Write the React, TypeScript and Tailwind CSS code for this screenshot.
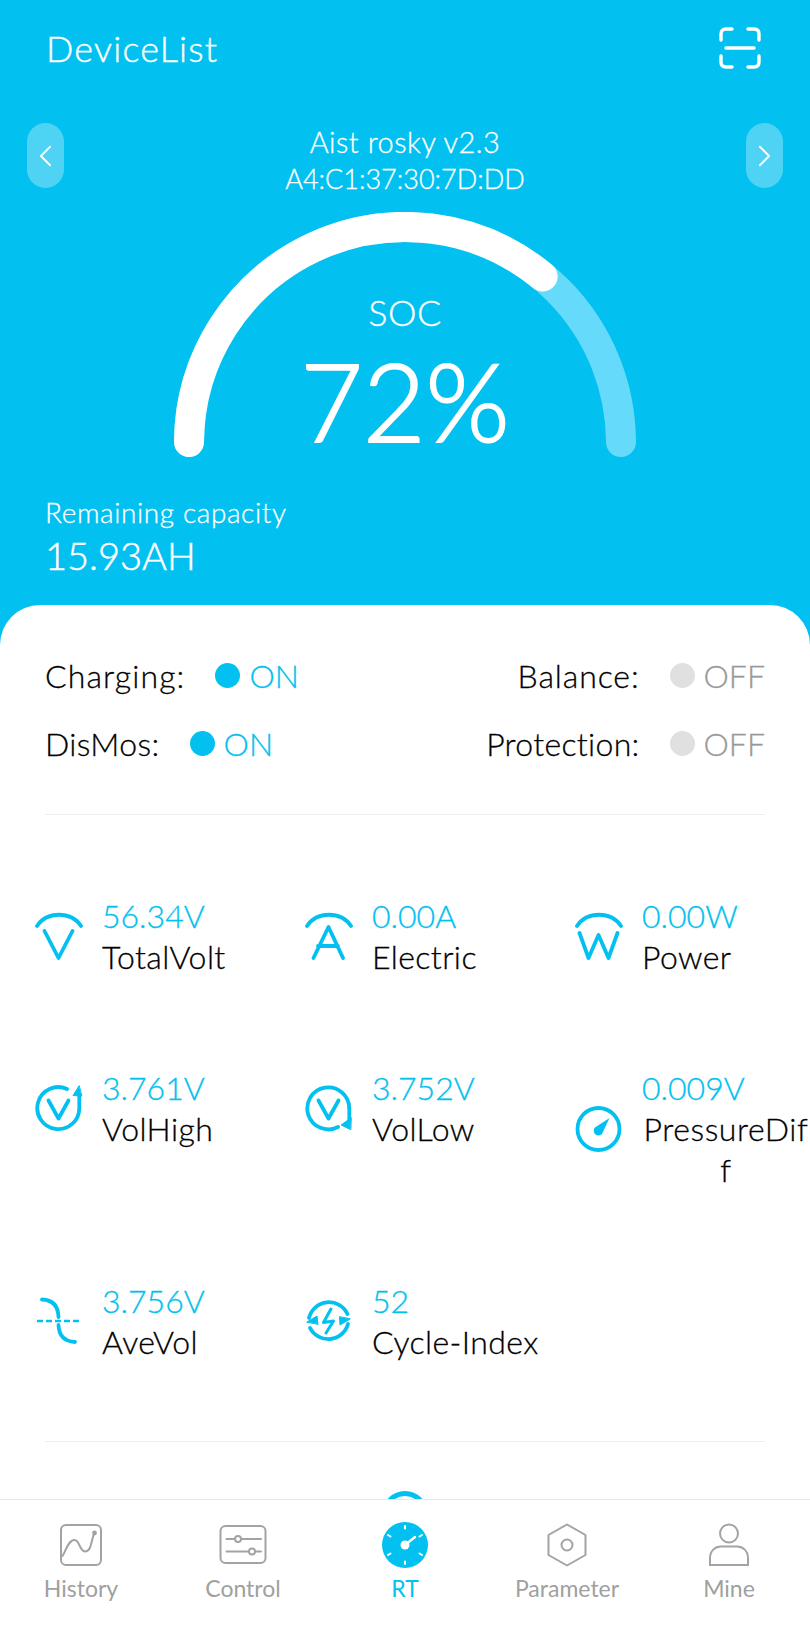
import { ReactNode } from "react";
import { ChevronLeft, ChevronRight } from "lucide-react";

const BLUE = "#02c1f0";

// top arc shared by the V / A / W icons
const Cap = () => <path d="M2 14C12 -1 36 -1 46 14" />;

function Icon({ children }: { children: ReactNode }) {
  return (
    <svg
      viewBox="0 0 48 48"
      className="w-12 h-12 shrink-0"
      fill="none"
      stroke={BLUE}
      strokeWidth={3.8}
      strokeLinecap="round"
      strokeLinejoin="round"
    >
      {children}
    </svg>
  );
}

const stats = [
  {
    value: "56.34V",
    label: "TotalVolt",
    icon: (
      <Icon>
        <Cap />
        <path d="M9.5 19L23.5 46L37.5 19" />
      </Icon>
    ),
  },
  {
    value: "0.00A",
    label: "Electric",
    icon: (
      <Icon>
        <Cap />
        <path d="M8.5 46L23.5 15L38 46M13 34H33" />
      </Icon>
    ),
  },
  {
    value: "0.00W",
    label: "Power",
    icon: (
      <Icon>
        <Cap />
        <path d="M4.5 21L13.5 46L23.5 23L33.5 46L42.5 21" />
      </Icon>
    ),
  },
  {
    value: "3.761V",
    label: "VolHigh",
    icon: (
      <Icon>
        <path d="M32 5A21 21 0 1 0 44.3 24V12" />
        <path d="M44 2L38 11.5L46.5 12Z" fill={BLUE} strokeWidth={1} />
        <path d="M13.5 16.5L23.5 34.5L33.5 16.5" />
      </Icon>
    ),
  },
  {
    value: "3.752V",
    label: "VolLow",
    icon: (
      <Icon>
        <path d="M44.3 24A21 21 0 1 0 33 43" />
        <path d="M44.3 24V36" />
        <path d="M45.5 45.5L36 41L46 34Z" fill={BLUE} strokeWidth={1} />
        <path d="M13.5 16.5L23.5 34.5L33.5 16.5" />
      </Icon>
    ),
  },
  {
    value: "0.009V",
    label: "PressureDiff",
    wrap: true,
    icon: (
      <Icon>
        <circle cx="23.5" cy="24" r="21" />
        <path d="M34.5 13L27 29A4.5 4.5 0 1 1 20 22.5Z" fill={BLUE} stroke="none" />
      </Icon>
    ),
  },
  {
    value: "3.756V",
    label: "AveVol",
    icon: (
      <Icon>
        <path d="M7 2.5Q23 3 23.5 20" />
        <path d="M23.5 28Q24 44 40 45" />
        <path d="M2 24H47" strokeWidth={2.6} strokeDasharray="6 3" strokeLinecap="butt" />
      </Icon>
    ),
  },
  {
    value: "52",
    label: "Cycle-Index",
    icon: (
      <Icon>
        <path d="M4 21A20.5 20.5 0 0 1 42.5 17" />
        <path d="M43 27A20.5 20.5 0 0 1 5 31" />
        <path d="M2 25L12 19L13 27Z" fill={BLUE} strokeWidth={1} />
        <path d="M45 22L35 28L34.5 20Z" fill={BLUE} strokeWidth={1} />
        <path d="M26 12L18.5 25.5L28.5 24L21 36" strokeWidth={3} />
      </Icon>
    ),
  },
];

const tabs = [
  {
    label: "History",
    icon: (
      <svg viewBox="0 0 42 42" className="w-[42px] h-[42px]" fill="none" stroke="#a3a3a3" strokeWidth={2} strokeLinecap="round">
        <rect x="1" y="1" width="40" height="40" rx="5" />
        <path d="M2.500 32C6 27 8 16 14.500 16C20 16 19 27 25 27.500C32 27.500 31 15 34.500 9" />
        <circle cx="34.500" cy="9" r="1.400" fill="#a3a3a3" />
      </svg>
    ),
  },
  {
    label: "Control",
    icon: (
      <svg viewBox="0 0 48 42" className="w-[48px] h-[42px]" fill="none" stroke="#a3a3a3" strokeWidth={2} strokeLinecap="round">
        <rect x="1.500" y="2" width="45" height="37" rx="5" />
        <path d="M7.500 15H16M22 15H42M7.500 27.500H30M36 27.500H42" />
        <circle cx="19" cy="15" r="3" />
        <circle cx="33" cy="27.500" r="3" />
      </svg>
    ),
  },
  {
    label: "RT",
    active: true,
    icon: (
      <svg viewBox="0 0 46 46" className="w-[46px] h-[46px]" fill="none">
        <circle cx="23" cy="23" r="23" fill={BLUE} />
        <g stroke="#ffffff" strokeWidth={2} strokeLinecap="round">
          <path d="M6 13L8.500 14.500M6 33L8.500 31.500M40 13L37.500 14.500M40 33L37.500 31.500M23 4V6.500M23 39.500V42" />
          <path d="M23 23L33 15" strokeWidth={2.400} />
        </g>
        <circle cx="23" cy="23" r="4.500" fill="#ffffff" />
      </svg>
    ),
  },
  {
    label: "Parameter",
    icon: (
      <svg viewBox="0 0 42 44" className="w-[42px] h-[44px]" fill="none" stroke="#a3a3a3" strokeWidth={2} strokeLinejoin="round">
        <path d="M21 1.500L39.500 12V32L21 42.500L2.500 32V12Z" />
        <circle cx="21" cy="22" r="5.500" />
      </svg>
    ),
  },
  {
    label: "Mine",
    icon: (
      <svg viewBox="0 0 42 44" className="w-[42px] h-[44px]" fill="none" stroke="#a3a3a3" strokeWidth={2}>
        <circle cx="21" cy="10.500" r="9" />
        <path d="M2 42V35C2 28 7 23.500 13 23.500H29C35 23.500 40 28 40 35V42Z" />
      </svg>
    ),
  },
];

function Status({ label, on, track }: { label: string; on?: boolean; track: string }) {
  return (
    <div className="flex items-center">
      <span className={`text-black font-light [-webkit-text-stroke:0.3px_#000000] ${track}`}>{label}</span>
      <span className={`ml-[30px] w-[25px] h-[25px] rounded-full ${on ? "bg-[#02c1f0]" : "bg-[#e0e0e0]"}`} />
      <span
        className={`ml-[9px] font-light ${
          on ? "text-[#02c1f0] [-webkit-text-stroke:0.3px_#02c1f0] mr-[2px]" : "text-[#999999] [-webkit-text-stroke:0.3px_#999999]"
        }`}
      >
        {on ? "ON" : "OFF"}
      </span>
    </div>
  );
}

export default function App() {
  return (
    <div
      className="h-[1626px] w-[810px] flex flex-col overflow-hidden bg-white"
      style={{ fontFamily: '"Lato", "Noto Sans", sans-serif' }}
    >
      <div className="flex-1 overflow-hidden bg-[#02c1f0]">
        <div className="h-[605px] text-white">
          <div className="h-[96px] flex items-center justify-between pl-[46px] pr-[49px]">
            <h1 className="text-[36px] font-light tracking-[1.2px] [-webkit-text-stroke:0.4px_#ffffff]">DeviceList</h1>
            <svg viewBox="0 0 42 42" className="w-[42px] h-[42px]" fill="none" stroke="#ffffff" strokeWidth={3.4} strokeLinecap="round">
              <path d="M2 13V7C2 3.500 4 2 7 2H13M29 2H35C38 2 40 3.500 40 7V13M2 29V35C2 38.500 4 40 7 40H13M29 40H35C38 40 40 38.500 40 35V29M7 21H35" />
            </svg>
          </div>

          <div className="mt-[27px] h-[73px] flex justify-between px-[27px]">
            <button className="w-[37px] h-[65px] rounded-full bg-white/30 flex items-center justify-center">
              <ChevronLeft size={44} strokeWidth={1.2} color="#ffffff" />
            </button>
            <div className="text-center font-light [-webkit-text-stroke:0.3px_#ffffff]">
              <div className="text-[29px] leading-[37px] tracking-[0.5px]">Aist rosky v2.3</div>
              <div className="text-[27px] leading-[37px]">A4:C1:37:30:7D:DD</div>
            </div>
            <button className="w-[37px] h-[65px] rounded-full bg-white/30 flex items-center justify-center">
              <ChevronRight size={44} strokeWidth={1.2} color="#ffffff" />
            </button>
          </div>

          <div className="relative w-[464px] h-[246px] mt-[16px] mx-auto">
            <svg viewBox="0 0 464 246" className="w-full h-full" fill="none" strokeWidth={30} strokeLinecap="round">
              <path d="M16.002 230A216 216 0 0 1 447.998 230" stroke="#66dafa" />
              <path d="M16.002 230A216 216 0 0 1 369.6 64.500" stroke="#ffffff" />
            </svg>
            <div className="absolute left-0 right-0 top-[75px] text-center">
              <div className="text-[36px] leading-[50px] font-light tracking-[0.5px] [-webkit-text-stroke:0.3px_#ffffff]">SOC</div>
              <div className="text-[108px] leading-[126px] font-light [-webkit-text-stroke:2px_#ffffff]">72%</div>
            </div>
          </div>

          <div className="pl-[45px] mt-[36px]">
            <div className="text-[28px] leading-[36px] font-light tracking-[0.6px] [-webkit-text-stroke:0.3px_#ffffff]">Remaining capacity</div>
            <div className="text-[38px] leading-[50px] font-light [-webkit-text-stroke:0.5px_#ffffff]">15.93AH</div>
          </div>
        </div>

        <div className="bg-white rounded-t-[40px] h-[900px] text-[32px] leading-[41px]">
          <div className="pt-[50px] px-[45px]">
            <div className="flex justify-between">
              <Status label="Charging:" on track="tracking-[1.1px]" />
              <Status label="Balance:" track="tracking-[0.9px]" />
            </div>
            <div className="flex justify-between mt-[27px]">
              <Status label="DisMos:" on track="tracking-[0.4px]" />
              <Status label="Protection:" track="tracking-[0.3px]" />
            </div>
            <div className="mt-[50px] border-t border-[#eeeeee]" />
          </div>

          <div className="grid grid-cols-3 items-start gap-y-[90px] pt-[80px]">
            {stats.map((s) => (
              <div key={s.label} className="flex items-center pl-[35px]">
                <div>{s.icon}</div>
                <div className="ml-[19px] min-w-0 flex-1">
                  <div className="text-[#02c1f0] font-light [-webkit-text-stroke:0.3px_#02c1f0]">{s.value}</div>
                  <div
                    className={`text-black font-light [-webkit-text-stroke:0.3px_#000000] ${
                      s.wrap ? "text-center break-all tracking-[0.6px]" : "tracking-[0.4px]"
                    }`}
                  >
                    {s.label}
                  </div>
                </div>
              </div>
            ))}
          </div>

          <div className="mt-[79px] mx-[45px] border-t border-[#eeeeee]" />
          <div className="mt-[49px] flex justify-center">
            <div className="w-[46px] h-[46px] rounded-full border-[5px] border-[#02c1f0]" />
          </div>
        </div>
      </div>

      <nav className="h-[127px] shrink-0 bg-white border-t border-[#e8e8e8] flex">
        {tabs.map((t) => (
          <div key={t.label} className="flex-1 flex flex-col items-center">
            <div className="h-[46px] mt-[22px] flex items-center">{t.icon}</div>
            <span className={`mt-[5px] text-[23px] leading-[30px] ${t.active ? "text-[#02c1f0]" : "text-[#a0a0a0]"}`}>
              {t.label}
            </span>
          </div>
        ))}
      </nav>
    </div>
  );
}
